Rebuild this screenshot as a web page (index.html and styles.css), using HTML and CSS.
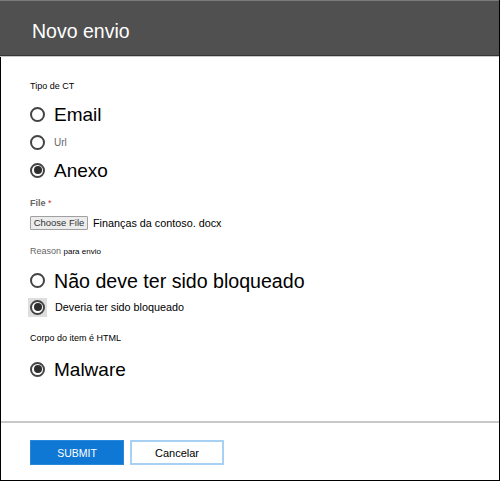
FILE: index.html
```html
<!DOCTYPE html>
<html lang="pt">
<head>
<meta charset="utf-8">
<link rel="stylesheet" href="styles.css">
</head>
<body>
<div class="panel">
  <header class="head"><h1 class="title">Novo envio</h1></header>
  <main class="content">
    <div class="label l-tipo">Tipo de CT</div>
    <div class="row big r-email"><span class="radio"></span><span class="txt">Email</span></div>
    <div class="row small r-url"><span class="radio"></span><span class="txt gray">Url</span></div>
    <div class="row big r-anexo"><span class="radio on"></span><span class="txt">Anexo</span></div>
    <div class="label l-file"><b class="gray">File</b> <span class="req">*</span></div>
    <div class="filerow"><span class="filebtn">Choose File</span><span class="fname">Finanças da contoso. docx</span></div>
    <div class="label l-reason"><span class="gray">Reason</span> <span class="tiny">para envio</span></div>
    <div class="row big r-nao"><span class="radio"></span><span class="txt wide">Não deve ter sido bloqueado</span></div>
    <div class="row med r-dev"><span class="focus"><span class="radio on"></span></span><span class="txt">Deveria ter sido bloqueado</span></div>
    <div class="label l-corpo">Corpo do item é HTML</div>
    <div class="row big r-mal"><span class="radio on"></span><span class="txt">Malware</span></div>
  </main>
  <footer class="foot">
    <button class="btn primary">SUBMIT</button>
    <button class="btn secondary">Cancelar</button>
  </footer>
</div>
</body>
</html>
```
FILE: styles.css
```css
* { box-sizing: border-box; }
html, body { margin: 0; padding: 0; background: #fff; }
body { font-family: "Liberation Sans", Arial, sans-serif; color: #000; }
.panel {
  width: 500px; height: 481px;
  display: flex; flex-direction: column;
  border-right: 1px solid #000;
  border-bottom: 1px solid #000;
  border-left: 1px solid #000;
}
.head {
  height: 57px;
  background: #505050;
  border-top: 1px solid #7a7a7a;
  border-bottom: 1px solid #c8c8c8;
  box-shadow: inset 0 -1px 0 #363636;
  margin: 0 0 0 -1px;
  padding: 6px 0 0 32px;
  display: flex; align-items: center;
}
.title {
  margin: 0;
  font-weight: normal; font-size: 19.5px; color: #fff;
}
.content { flex: 1; padding: 23px 0 0 29px; }
.label { height: 12px; line-height: 12px; font-size: 9px; color: #000; }
.gray { color: #666; }
.label b { font-weight: bold; }
.req { color: #d13438; }
.tiny { font-size: 8px; }
.row { display: flex; align-items: center; }
.big { height: 24px; }
.small, .med { height: 20px; }
.radio {
  width: 15px; height: 15px; border-radius: 50%;
  border: 2px solid #444; background: #fff;
  flex: none; position: relative;
}
.radio.on::after {
  content: ""; position: absolute; left: 1.5px; top: 1.5px;
  width: 8px; height: 8px; border-radius: 50%; background: #2e2e2e;
}
.txt { margin-left: 9px; }
.big .txt { font-size: 19px; padding-top: 2px; }
.big .txt.wide { font-size: 19.6px; }
.small .txt { font-size: 10px; }
.med .txt { font-size: 10.8px; }
.focus {
  width: 19px; height: 19px; margin-left: -2px; margin-right: -2px;
  background: #dedede; display: flex; align-items: center; justify-content: center;
}
.r-email { margin-top: 10px; }
.r-url { margin-top: 6px; }
.r-anexo { margin-top: 6px; }
.l-file { margin-top: 15px; }
.filerow { margin-top: 6px; height: 15px; display: flex; align-items: center; }
.filebtn {
  height: 14px; width: 58px; border: 1px solid #a0a0a0; background: #ececec;
  font-size: 9.5px; color: #333; display: flex; align-items: center; justify-content: center;
  border-radius: 1px; white-space: nowrap;
}
.fname { margin-left: 5px; font-size: 10.8px; }
.l-reason { margin-top: 15px; }
.r-nao { margin-top: 11px; }
.r-dev { margin-top: 5px; }
.r-dev .txt { margin-left: 10px; }
.l-corpo { margin-top: 15px; }
.r-mal { margin-top: 13px; }
.foot {
  height: 59px;
  border-top: 2px solid #c8c8c8;
  padding: 17px 0 0 29px;
  display: flex; align-items: flex-start; gap: 6px;
}
.btn {
  height: 25px; margin: 0; font-family: inherit; font-size: 10.5px;
  border-radius: 0; cursor: pointer; padding: 0;
}
.primary { width: 94px; background: #0f78d4; color: #fff; border: 1px solid #2a88dc; }
.secondary { width: 94px; background: #fff; color: #000; border: 2px solid #a8d0f2; font-size: 11px; }
```
